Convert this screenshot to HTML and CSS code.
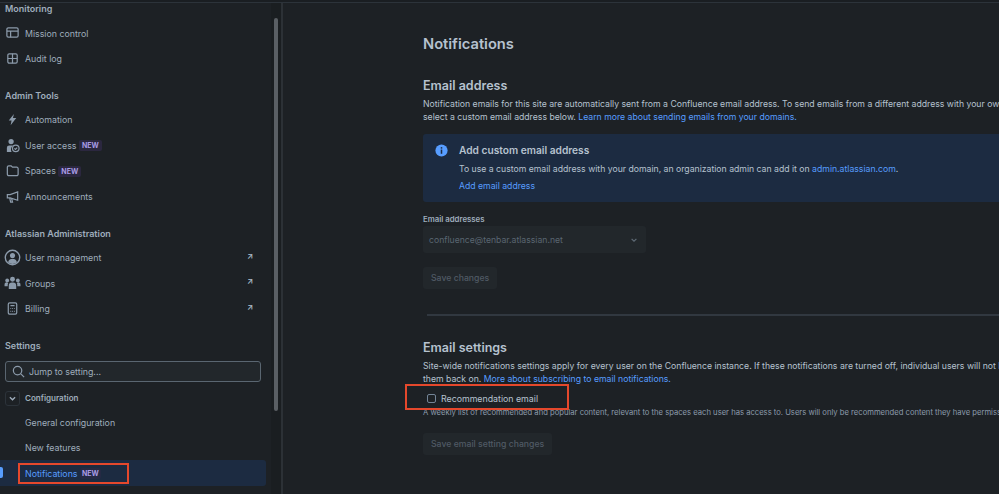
FILE: index.html
```html
<!DOCTYPE html>
<html lang="en">
<head>
<meta charset="utf-8">
<title>Notifications</title>
<link rel="stylesheet" href="styles.css">
</head>
<body>
<div class="topline"></div>
<div class="app">
  <nav class="sidebar">
    <h3 class="group first">Monitoring</h3>
    <a class="item"><svg class="ic" viewBox="0 0 16 16"><rect x="2" y="3" width="12" height="10" rx="1.5"/><path d="M2 6.5h12M6 6.5V13"/></svg>Mission control</a>
    <a class="item"><svg class="ic" viewBox="0 0 16 16"><rect x="3" y="3" width="10" height="10" rx="1.5"/><path d="M3 8h10M8 3v10"/></svg>Audit log</a>
    <h3 class="group">Admin Tools</h3>
    <a class="item"><svg class="ic" viewBox="0 0 16 16"><path class="fill" d="M9.5 2 4 9h3l-1 5 6-7.500H8.500z"/></svg>Automation</a>
    <a class="item"><svg class="ic" viewBox="0 0 16 16"><circle class="fill" cx="6.500" cy="3.800" r="2.800"/><path class="fill" d="M2 15v-4.500A2.500 2.500 0 0 1 4.500 8h4a6 6 0 0 0-1.500 7z"/><circle cx="11.500" cy="11" r="3.500"/><path d="m10 11 1.200 1.200 1.800-2"/></svg>User access <span class="lozenge">NEW</span></a>
    <a class="item"><svg class="ic" viewBox="0 0 16 16"><path d="M2.500 4.500A1.500 1.500 0 0 1 4 3h2.500L8 4.500h4.500A1.500 1.500 0 0 1 14 6v6a1.500 1.500 0 0 1-1.500 1.500H4A1.500 1.500 0 0 1 2.500 12z"/></svg>Spaces <span class="lozenge">NEW</span></a>
    <a class="item"><svg class="ic" viewBox="0 0 16 16"><path d="M2.500 6h3l8-3v9l-8-2.500h-3zM5 9.500 6 14h2L7 10"/></svg>Announcements</a>
    <h3 class="group">Atlassian Administration</h3>
    <a class="item"><svg class="ic large" viewBox="0 0 16 16"><circle cx="8" cy="8" r="6.800"/><circle class="fill" cx="8" cy="6.200" r="2.400"/><path class="fill" d="M3.800 12.500C4.500 10 6 9.500 8 9.500s3.500.5 4.200 3a6 6 0 0 1-8.400 0z"/></svg>User management<span class="ext">↗</span></a>
    <a class="item"><svg class="ic large" viewBox="0 0 16 16"><circle class="fill" cx="8" cy="5" r="2.300"/><circle class="fill" cx="3" cy="6" r="1.800"/><circle class="fill" cx="13" cy="6" r="1.800"/><path class="fill" d="M4.500 14v-3a3 3 0 0 1 3-3h1a3 3 0 0 1 3 3v3zM.5 11.500V10a2 2 0 0 1 3.500-1.500A4 4 0 0 0 3.500 11v.5zM15.500 11.500V10A2 2 0 0 0 12 8.500a4 4 0 0 1 .5 2.500v.5z"/></svg>Groups<span class="ext">↗</span></a>
    <a class="item"><svg class="ic" viewBox="0 0 16 16"><rect x="3.500" y="2" width="9" height="12" rx="1.500"/><path d="M5.800 5h4.400M5.800 8h.8M7.700 8h.8M9.500 8h.8M5.800 11h.8M7.700 11h.8M9.500 11h.8"/></svg>Billing<span class="ext">↗</span></a>
    <h3 class="group settings">Settings</h3>
    <div class="search"><svg class="ic" viewBox="0 0 16 16"><circle cx="7" cy="7" r="4.500"/><path d="m10.500 10.500 3.500 3.500"/></svg><span>Jump to setting...</span></div>
    <div class="tree-head"><span class="toggle"><svg viewBox="0 0 10 10"><path d="m3 4 2 2 2-2"/></svg></span><b>Configuration</b></div>
    <a class="item sub">General configuration</a>
    <a class="item sub">New features</a>
    <a class="item sub current">Notifications <span class="lozenge">NEW</span></a>
  </nav>
  <div class="scrollbar"><div class="thumb"></div></div>
  <main class="main">
    <h1>Notifications</h1>
    <h2 class="address-title">Email address</h2>
    <p>Notification emails for this site are automatically sent from a Confluence email address. To send emails from a different address with your own domain,<br>select a custom email address below. <a>Learn more about sending emails from your domains.</a></p>
    <section class="notice">
      <svg class="info" viewBox="0 0 16 16"><circle cx="8" cy="8" r="6.500"/><rect x="7.200" y="7" width="1.600" height="4.500"/><rect x="7.200" y="4.400" width="1.600" height="1.600"/></svg>
      <div>
        <h4>Add custom email address</h4>
        <p>To use a custom email address with your domain, an organization admin can add it on <a>admin.atlassian.com</a>.</p>
        <a class="action">Add email address</a>
      </div>
    </section>
    <label class="field-label">Email addresses</label>
    <div class="select"><span>confluence@tenbar.atlassian.net</span><svg viewBox="0 0 10 10"><path d="m3 4 2 2 2-2"/></svg></div>
    <button class="btn">Save changes</button>
    <hr>
    <h2 class="settings-title">Email settings</h2>
    <p>Site-wide notifications settings apply for every user on the Confluence instance. If these notifications are turned off, individual users will not be able to turn<br>them back on. <a>More about subscribing to email notifications.</a></p>
    <div class="check"><span class="box"></span>Recommendation email</div>
    <p class="help">A weekly list of recommended and popular content, relevant to the spaces each user has access to. Users will only be recommended content they have permission to view.</p>
    <button class="btn">Save email setting changes</button>
  </main>
</div>
<div class="mark mark-nav"></div>
<div class="mark mark-check"></div>
</body>
</html>
```
FILE: styles.css
```css
* { box-sizing: border-box; }
html, body { margin: 0; height: 100%; overflow: hidden; }
body {
  background: #1d2125;
  color: #b6c2cf;
  font-family: Inter, "Liberation Sans", sans-serif;
  font-size: 8.800px;
  position: relative;
}
.topline { height: 3px; border-bottom: 1px solid #2c333a; background: #1a1e22; }
.app { display: flex; height: 491px; }

.sidebar { width: 271px; flex: none; padding: 0 5px 0 0; }
.group { margin: 17.500px 0 4.250px 5px; font-size: 9px; font-weight: 600; line-height: 14px; color: #9fadbc; height: 14px; }
.group.first { margin-top: -1px; }
.group.settings { margin-bottom: 8.250px; }
.item { display: flex; align-items: center; height: 25.500px; color: #9fadbc; padding-left: 25px; position: relative; white-space: pre; }
.ic { position: absolute; left: 5px; top: 5px; width: 15px; height: 15px; fill: none; stroke: #8c9bab; stroke-width: 1.300; }
.ic.large { left: 4px; top: 4px; width: 17px; height: 17px; }
.ic .fill { fill: #8c9bab; stroke: none; }
.lozenge { margin: 1px 0 0; background: #2b273f; color: #a99ce6; font-size: 7px; font-weight: 700; padding: 1px 3px; border-radius: 2px; line-height: 9px; }
.ext { position: absolute; left: 247px; top: 6px; font-size: 8px; color: #9fadbc; font-weight: 700; }
.search { position: relative; margin-left: 5px; width: 256px; height: 21px; border: 1px solid #5a6671; border-radius: 3px; background: #22272b; color: #9fadbc; padding: 0 0 0 23px; display: flex; align-items: center; }
.search .ic { left: 5px; top: 2px; }
.tree-head { display: flex; align-items: center; height: 24px; margin: 4px 0 0 5px; }
.tree-head b { font-weight: 600; font-size: 8.050px; color: #9fadbc; margin-left: 5px; }
.toggle { width: 15px; height: 15px; border: 1px solid #2c333a; border-radius: 3px; display: flex; }
.toggle svg, .select svg { fill: none; stroke: #9fadbc; stroke-width: 1; }
.item.sub { height: 25px; }
.item.current { margin-top: 0; height: 26px; background: #1c2b41; color: #579dff; border-radius: 0 3px 3px 0; width: 266px; }
.item.current::before { content: ""; position: absolute; left: 0; top: 7px; width: 3px; height: 11px; background: #579dff; border-radius: 0 2px 2px 0; }
.item.current .lozenge { background: #252a44; padding: 1px 2px; }

.scrollbar { width: 10px; flex: none; padding: 15px 3px 0; background: #1a1e21; }
.thumb { height: 393px; background: #5a5f64; border-radius: 3px; }
.main { flex: 1; min-width: 0; border-left: 2px solid #2c3136; padding: 29px 0 0 140px; overflow: hidden; white-space: nowrap; }
h1 { margin: 0; font-size: 14.700px; line-height: 24px; font-weight: 600; color: #b6c2cf; }
h2 { margin: 0; font-size: 12.500px; line-height: 16px; font-weight: 600; color: #b6c2cf; }
.address-title { margin-top: 22px; }
p { margin: 4px 0 0; line-height: 13px; font-size: 8.680px; color: #b6c2cf; }
.main a { color: #579dff; }
.notice { display: flex; margin-top: 10px; background: #1c2b41; height: 68px; padding: 9px 0 0 11px; border-radius: 3px 0 0 3px; }
.info { width: 15px; height: 15px; margin-right: 10px; fill: #579dff; flex: none; }
.info rect { fill: #1c2b41; }
h4 { margin: 0; font-size: 10.200px; line-height: 14px; font-weight: 600; color: #b6c2cf; }
.notice p { margin-top: 6px; }
.action { display: block; margin-top: 4px; line-height: 13px; font-size: 8.680px; }
.field-label { display: block; margin-top: 12px; font-size: 7.800px; font-weight: 600; line-height: 11px; color: #9fadbc; }
.select { display: flex; justify-content: space-between; align-items: center; margin-top: 1px; width: 223px; height: 27px; background: #22272b; border-radius: 3px; padding: 0 6px; color: #5a6671; font-size: 8.670px; }
.select svg { width: 12px; height: 12px; stroke: #5f6b76; }
.btn { display: block; margin: 0; border: 0; height: 22px; padding: 0 8px; background: #22272b; color: #505a65; border-radius: 3px; font: 500 8.700px Inter, "Liberation Sans", sans-serif; }
.select + .btn { margin-top: 14px; }
hr { margin: 25px 0 0 4px; border: 0; height: 2px; background: #313840; }
.settings-title { margin-top: 24px; }
.settings-title + p { margin-top: 3.500px; }
.check { display: flex; align-items: center; height: 14px; margin-top: 5.500px; color: #b6c2cf; font-size: 8.800px; }
.box { width: 9px; height: 9px; margin: 0 5px 0 4px; border: 1px solid #738496; border-radius: 2px; }
p.help { margin-top: 3px; font-size: 7.650px; line-height: 10px; color: #8c9bab; }
.help + .btn { margin-top: 15px; }

.mark { position: absolute; border: 2px solid #e5482c; }
.mark-nav { left: 18px; top: 463px; width: 111px; height: 21px; }
.mark-check { left: 405px; top: 384px; width: 164px; height: 26px; }
```
